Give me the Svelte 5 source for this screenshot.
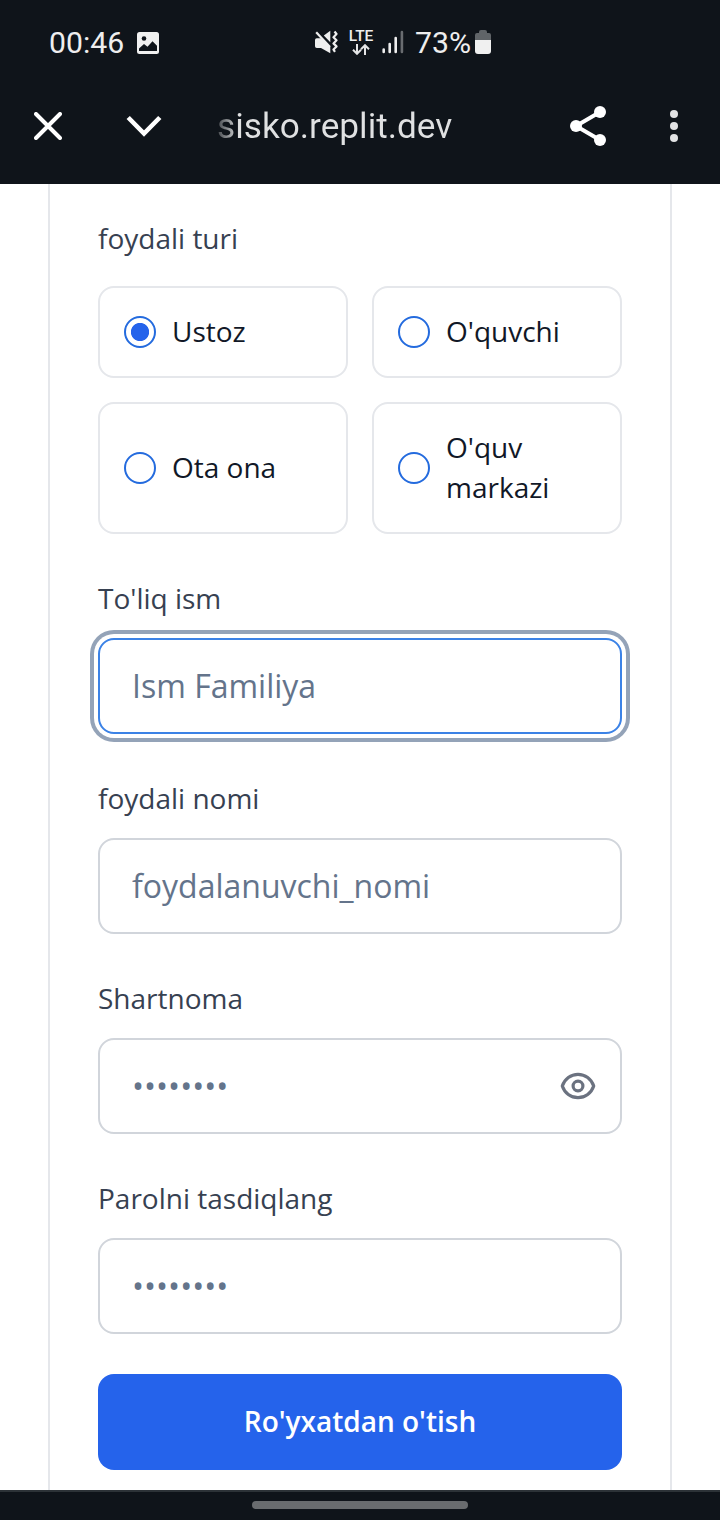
<script>
  const roles = ['Ustoz', "O'quvchi", 'Ota ona', "O'quv markazi"];
  let selected = $state('Ustoz');
</script>

<div class="screen">
  <header>
    <div class="status">
      <span class="clock">00:46</span>
      <svg class="photo" width="22" height="22" viewBox="0 0 22 22">
        <rect width="22" height="22" rx="2.500" fill="#f0f0f0" />
        <circle cx="7" cy="6.500" r="2.300" fill="#0f141a" />
        <path d="M2 16.500 7 12l3.500 2.800 5-5.500 4.500 4.500V19H2z" fill="#0f141a" />
        <path d="M2 19.200h18V22H2z" fill="#f0f0f0" />
      </svg>
      <svg class="mute" width="24" height="24" viewBox="0 0 24 24">
        <path d="M1 10q0-1.800 1.800-1.800H8L16.300 17v6.300L7 18H2.800Q1 18 1 16.200zM9.800 5.500 16.300.800v11.500z" fill="#eee" />
        <path d="M2.200 2.200 16 17" stroke="#eee" stroke-width="2.200" />
        <path d="m20.500 1.500 2 2.500-3 3.200 3 3-3 3.200 3 3-3 3.200 1.500 2.200" fill="none" stroke="#eee" stroke-width="2.200" stroke-linejoin="round" />
      </svg>
      <div class="network">
        <span>LTE</span>
        <svg width="18" height="11" viewBox="0 0 18 11" fill="none" stroke="#e4e5e6" stroke-width="2">
          <path d="M5 0v9.500M1 5.800l4 4 4-4M13 11V1.500M9 5.200l4-4 4 4" />
        </svg>
      </div>
      <svg class="signal" width="22" height="24" viewBox="0 0 22 24">
        <path d="M1.700 19.500V22M7.700 14v8M13.700 8v14" stroke="#eee" stroke-width="2.600" stroke-linecap="round" />
        <path d="M19.900 2v20" stroke="#696c70" stroke-width="2.600" stroke-linecap="round" />
      </svg>
      <span class="percent">73%</span>
      <svg class="battery" width="16" height="24" viewBox="0 0 16 24">
        <path d="M0 10V5q0-2 2-2h2V2q0-2 2-2h4q2 0 2 2v1h2q2 0 2 2v5z" fill="#606468" />
        <path d="M0 10h16v11q0 3-3 3H3q-3 0-3-3z" fill="#f0f0f0" />
      </svg>
    </div>
    <nav>
      <svg class="close" width="28" height="28" viewBox="0 0 28 28"><path d="m2 2 24 24M26 2 2 26" stroke="#fff" stroke-width="4" stroke-linecap="round" /></svg>
      <svg class="chevron" width="36" height="22" viewBox="0 0 36 22"><path d="m2.200 2.500 15.800 16 15.800-16" fill="none" stroke="#fff" stroke-width="4.600" /></svg>
      <span class="url">sisko.replit.dev</span>
      <svg class="share" width="38" height="40" viewBox="0 0 38 40"><path d="M30 6 6 20l24 14" fill="none" stroke="#fff" stroke-width="4" /><g fill="#fff"><circle cx="30" cy="6" r="6" /><circle cx="6" cy="20" r="6" /><circle cx="30" cy="34" r="6" /></g></svg>
      <svg class="more" width="8" height="32" viewBox="0 0 8 32" fill="#e2e3e4"><circle cx="4" cy="4" r="4" /><circle cx="4" cy="16" r="4" /><circle cx="4" cy="28" r="4" /></svg>
    </nav>
  </header>

  <main>
    <form onsubmit={(e) => e.preventDefault()}>
      <span class="label">foydali turi</span>
      <div class="roles">
        {#each roles as role}
          <label class="role">
            <input type="radio" name="role" value={role} bind:group={selected} />
            <span>{role}</span>
          </label>
        {/each}
      </div>

      <label class="label" for="name">To'liq ism</label>
      <input class="field active" id="name" placeholder="Ism Familiya" />

      <label class="label" for="user">foydali nomi</label>
      <input class="field" id="user" placeholder="foydalanuvchi_nomi" />

      <label class="label" for="pass">Shartnoma</label>
      <div class="field password">
        <input id="pass" type="password" placeholder="••••••••" />
        <svg width="40" height="40" viewBox="0 0 40 40" fill="none" stroke="#6b7280" stroke-width="3.200" stroke-linecap="round" stroke-linejoin="round"><path d="M4.300 20C6.600 13 12.800 8.300 20 8.300S33.400 13 35.700 20C33.400 27 27.200 31.700 20 31.700S6.600 27 4.300 20Z" /><circle cx="20" cy="20" r="4.900" /></svg>
      </div>

      <label class="label" for="confirm">Parolni tasdiqlang</label>
      <input class="field" id="confirm" type="password" placeholder="••••••••" />

      <button type="submit">Ro'yxatdan o'tish</button>
    </form>
  </main>
  <footer><span></span></footer>
</div>

<style>
  :global(body) { margin: 0; background: #fff; }
  .screen {
    width: 720px; height: 1520px; display: flex; flex-direction: column;
    overflow: hidden; background: #fff; font-family: "Open Sans", sans-serif;
  }
  .screen * { box-sizing: border-box; }
  svg { display: block; flex: none; }
  header { height: 184px; flex: none; background: #0f141a; font-family: Roboto, sans-serif; }
  .status { height: 84px; display: flex; align-items: center; padding-left: 49px; color: #eee; font-size: 30.200px; }
  .clock { width: 88px; line-height: 36px; padding-top: 2px; white-space: nowrap; }
  .percent { width: 60px; line-height: 36px; padding-top: 2px; white-space: nowrap; }
  .photo { margin-top: 2px; }
  .mute { margin-left: 155px; }
  .network { width: 26px; margin-left: 10px; display: flex; flex-direction: column; align-items: center; gap: 1px; }
  .network span { font-size: 15.500px; line-height: 14px; font-weight: 500; }
  .signal { margin: 0 11px 0 8px; }
  nav { height: 84px; display: flex; align-items: center; padding-left: 34px; }
  .chevron { margin-left: 64px; }
  .url {
    width: 288px; margin-left: 55px; font-size: 35.200px; line-height: 44px; white-space: nowrap;
    color: transparent; background: linear-gradient(90deg, #42464b 0, #e0e1e2 22px); background-clip: text;
  }
  .share { margin-left: 65px; }
  .more { margin-left: 62px; }
  main { flex: 1; min-height: 0; padding: 0 48px; overflow: hidden; }
  form {
    height: 100%; border: solid #e5e7eb; border-width: 0 2px; padding: 34px 48px 0;
    display: flex; flex-direction: column;
  }
  .label { font-size: 28px; line-height: 40px; color: #374151; }
  .roles { display: grid; grid-template-columns: 1fr 1fr; gap: 24px; margin: 28px 0 44px; }
  .role {
    display: flex; align-items: center; gap: 16px; padding: 24px; border: 2px solid #e5e7eb;
    border-radius: 16px; font-size: 28px; line-height: 40px; color: #111827;
  }
  .role span { margin: -1px 0 1px; }
  .role input {
    appearance: none; width: 32px; height: 32px; margin: 0; flex: none;
    border: 2px solid #246bde; border-radius: 50%; background: #fff;
  }
  .role input:checked { background: radial-gradient(circle, #2563eb 8.700px, #fff 9.500px); }
  .field {
    width: 100%; height: 96px; flex: none; margin: 20px 0 44px; padding: 0 32px 2px;
    border: 2px solid #d1d5db; border-radius: 16px; background: #fff;
    font: 32px "Open Sans", sans-serif; outline: none;
  }
  ::placeholder { color: #64748b; opacity: 1; }
  .active { border-color: #3b82e6; box-shadow: 0 0 0 4px #fff, 0 0 0 8px #94a3b8; }
  .password { display: flex; align-items: center; padding: 0 22px 0 32px; }
  .password input { flex: 1; min-width: 0; padding: 0 0 2px; border: 0; outline: 0; font: inherit; background: none; }
  button {
    height: 96px; flex: none; margin-top: -4px; padding-bottom: 3px; border: 0; border-radius: 16px;
    background: #2563eb; color: #fff; font: 600 28px "Open Sans", sans-serif;
  }
  footer { height: 30px; flex: none; border-top: 2px solid #2c3237; background: #0f141a; display: flex; justify-content: center; padding-top: 9px; }
  footer span { width: 216px; height: 8px; border-radius: 4px; background: #696c6f; }
</style>
